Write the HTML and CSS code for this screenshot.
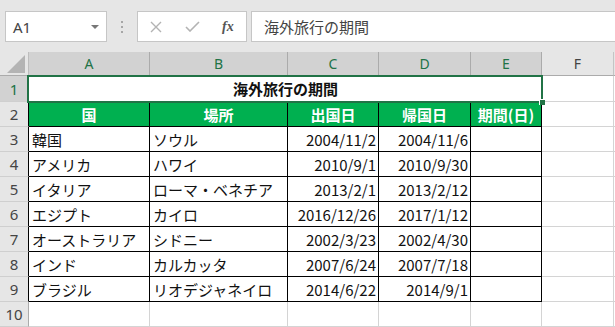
FILE: index.html
```html
<!DOCTYPE html>
<html lang="ja">
<head>
    <meta charset="UTF-8">
    <title>海外旅行の期間</title>
    <link rel="stylesheet" href="styles.css">
</head>
<body>
    <div class="app">
        <!-- barra de fórmulas -->
        <div class="bar">
            <div class="namebox"><span>A1</span><i class="caret"></i></div>
            <div class="grip"><i></i><i></i><i></i></div>
            <div class="fxbox">
                <svg class="cancel" width="12" height="12" viewBox="0 0 12 12">
                    <path d="M1 1L11 11M11 1L1 11" stroke="#b3b3b3" stroke-width="1.4" fill="none"/>
                </svg>
                <svg class="enter" width="15" height="11" viewBox="0 0 15 11">
                    <path d="M1 6L5 10L14 1" stroke="#b3b3b3" stroke-width="1.6" fill="none"/>
                </svg>
                <span class="fx">fx</span>
            </div>
            <div class="formula">海外旅行の期間</div>
        </div>

        <!-- hoja -->
        <div class="sheet">
            <div class="corner">
                <svg width="18" height="18" viewBox="0 0 18 18"><path d="M18 0V18H0Z" fill="#b4b4b4"/></svg>
            </div>
            <div class="colhead sel">A</div>
            <div class="colhead sel">B</div>
            <div class="colhead sel">C</div>
            <div class="colhead sel">D</div>
            <div class="colhead sel">E</div>
            <div class="colhead">F</div>
            <div class="colhead"></div>

            <div class="rowhead sel">1</div>
            <div class="cell title">海外旅行の期間</div>
            <div class="cell"></div>
            <div class="cell"></div>

            <div class="rowhead edge">2</div>
            <div class="cell t h">国</div>
            <div class="cell t h">場所</div>
            <div class="cell t h">出国日</div>
            <div class="cell t h">帰国日</div>
            <div class="cell t h">期間(日)</div>
            <div class="cell"></div>
            <div class="cell"></div>

            <div class="rowhead edge">3</div>
            <div class="cell t">韓国</div>
            <div class="cell t">ソウル</div>
            <div class="cell t n">2004/11/2</div>
            <div class="cell t n">2004/11/6</div>
            <div class="cell t"></div>
            <div class="cell"></div>
            <div class="cell"></div>

            <div class="rowhead edge">4</div>
            <div class="cell t">アメリカ</div>
            <div class="cell t">ハワイ</div>
            <div class="cell t n">2010/9/1</div>
            <div class="cell t n">2010/9/30</div>
            <div class="cell t"></div>
            <div class="cell"></div>
            <div class="cell"></div>

            <div class="rowhead edge">5</div>
            <div class="cell t">イタリア</div>
            <div class="cell t">ローマ・ベネチア</div>
            <div class="cell t n">2013/2/1</div>
            <div class="cell t n">2013/2/12</div>
            <div class="cell t"></div>
            <div class="cell"></div>
            <div class="cell"></div>

            <div class="rowhead edge">6</div>
            <div class="cell t">エジプト</div>
            <div class="cell t">カイロ</div>
            <div class="cell t n">2016/12/26</div>
            <div class="cell t n">2017/1/12</div>
            <div class="cell t"></div>
            <div class="cell"></div>
            <div class="cell"></div>

            <div class="rowhead edge">7</div>
            <div class="cell t">オーストラリア</div>
            <div class="cell t">シドニー</div>
            <div class="cell t n">2002/3/23</div>
            <div class="cell t n">2002/4/30</div>
            <div class="cell t"></div>
            <div class="cell"></div>
            <div class="cell"></div>

            <div class="rowhead edge">8</div>
            <div class="cell t">インド</div>
            <div class="cell t">カルカッタ</div>
            <div class="cell t n">2007/6/24</div>
            <div class="cell t n">2007/7/18</div>
            <div class="cell t"></div>
            <div class="cell"></div>
            <div class="cell"></div>

            <div class="rowhead edge">9</div>
            <div class="cell t">ブラジル</div>
            <div class="cell t">リオデジャネイロ</div>
            <div class="cell t n">2014/6/22</div>
            <div class="cell t n">2014/9/1</div>
            <div class="cell t"></div>
            <div class="cell"></div>
            <div class="cell"></div>

            <div class="rowhead">10</div>
            <div class="cell"></div>
            <div class="cell"></div>
            <div class="cell"></div>
            <div class="cell"></div>
            <div class="cell"></div>
            <div class="cell"></div>
            <div class="cell"></div>

            <!-- selección A1:E1 -->
            <div class="selection"></div>
            <div class="handle"></div>
        </div>
    </div>
</body>
</html>
```

FILE: styles.css
```css
* {
    margin: 0px;
    padding: 0px;
    box-sizing: border-box;
}
html, body {
    height: 100%;
}
body {
    background-color: #e6e6e6;
    font-family: "Noto Sans CJK JP", "Noto Sans", sans-serif;
    overflow: hidden;
}
.app {
    width: 615px;
    height: 327px;
    overflow: hidden;
}

/* barra de fórmulas */
.bar {
    display: flex;
    align-items: flex-start;
    height: 52px;
    padding-top: 11px;
    padding-left: 5px;
}
.bar > div {
    flex: none;
}
.namebox {
    display: flex;
    align-items: center;
    justify-content: space-between;
    width: 102px;
    height: 31px;
    padding: 0px 7px 0px 7px;
    background-color: #ffffff;
    border: 1px solid #c6c6c6;
    font-family: "Noto Sans", sans-serif;
    font-size: 15px;
    color: #444444;
}
.caret {
    width: 0px;
    height: 0px;
    border-left: 4px solid transparent;
    border-right: 4px solid transparent;
    border-top: 4px solid #777777;
}
.grip {
    display: flex;
    flex-direction: column;
    align-items: center;
    justify-content: center;
    gap: 3px;
    width: 30px;
    height: 31px;
}
.grip i {
    width: 2px;
    height: 2px;
    background-color: #a6a6a6;
}
.fxbox {
    display: flex;
    align-items: center;
    width: 110px;
    height: 31px;
    background-color: #ffffff;
    border: 1px solid #c6c6c6;
}
.fxbox .cancel {
    margin-left: 12px;
}
.fxbox .enter {
    margin-left: 23px;
}
.fxbox .fx {
    margin-left: 22px;
    font-family: "Liberation Serif", serif;
    font-style: italic;
    font-weight: bold;
    font-size: 14px;
    color: #555555;
}
.formula {
    width: 400px;
    height: 31px;
    margin-left: 4px;
    padding-left: 12px;
    background-color: #ffffff;
    border: 1px solid #c6c6c6;
    line-height: 29px;
    font-size: 15px;
    color: #444444;
}

/* hoja */
.sheet {
    position: relative;
    display: grid;
    grid-template-columns: 29px 121px 138px 91px 92px 71px 72px 1fr;
    grid-template-rows: 24px 26px repeat(9, 25px);
    background-color: #ffffff;
}
.corner {
    display: flex;
    align-items: flex-end;
    justify-content: flex-end;
    padding: 0px 3px 2px 0px;
    background-color: #e6e6e6;
    border-right: 1px solid #bdbdbd;
    border-bottom: 1px solid #ababab;
}
.colhead {
    display: flex;
    align-items: center;
    justify-content: center;
    background-color: #e6e6e6;
    border-right: 1px solid #c4c4c4;
    border-bottom: 1px solid #ababab;
    font-family: "Noto Sans", sans-serif;
    font-size: 14px;
    color: #444444;
}
.colhead.sel {
    background-color: #d2d2d2;
    border-right-color: #ababab;
    border-bottom-color: #217346;
    color: #217346;
}
.rowhead {
    display: flex;
    align-items: center;
    justify-content: center;
    background-color: #e6e6e6;
    border-right: 1px solid #ababab;
    border-bottom: 1px solid #cfcfcf;
    font-family: "Noto Sans", sans-serif;
    font-size: 15px;
    color: #444444;
}
.rowhead.sel {
    background-color: #d2d2d2;
    color: #217346;
}
.rowhead.edge {
    border-right-color: #000000;
}
.cell {
    display: flex;
    align-items: center;
    padding: 0px 2px 0px 3px;
    border-right: 1px solid #d4d4d4;
    border-bottom: 1px solid #d4d4d4;
    font-size: 15px;
    color: #111111;
    white-space: nowrap;
    overflow: hidden;
}
.cell.title {
    grid-column: span 5;
    justify-content: center;
    border-bottom-color: #000000;
    font-weight: bold;
}
.cell.t {
    border-right-color: #000000;
    border-bottom-color: #000000;
}
.cell.h {
    justify-content: center;
    background-color: #00b050;
    color: #ffffff;
    font-weight: bold;
    padding: 0px;
    overflow: visible;
}
.cell.n {
    justify-content: flex-end;
}
.selection {
    position: absolute;
    left: 27px;
    top: 23px;
    width: 516px;
    height: 28px;
    border: 2px solid #217346;
}
.handle {
    position: absolute;
    left: 539px;
    top: 47px;
    width: 6px;
    height: 6px;
    background-color: #217346;
    border-left: 1px solid #ffffff;
    border-top: 1px solid #ffffff;
}
```
